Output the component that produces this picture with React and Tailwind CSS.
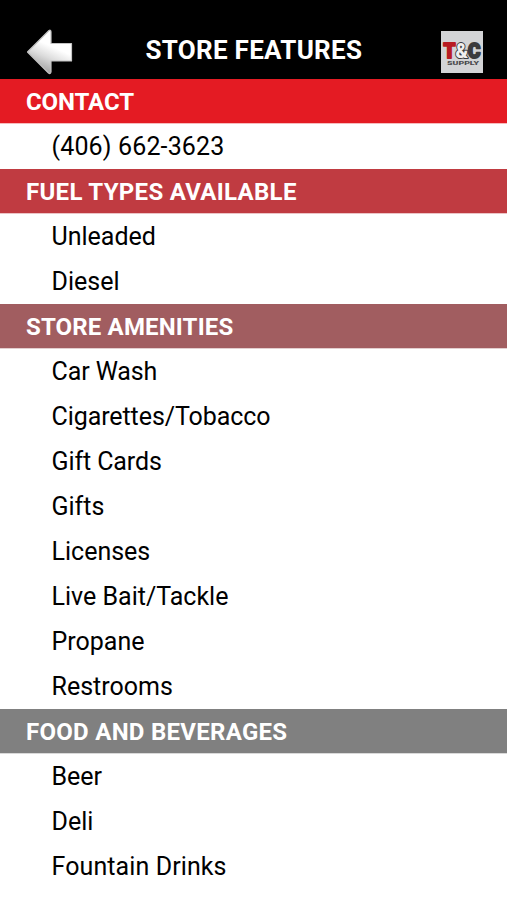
const sections = [
  {
    title: "CONTACT",
    color: "bg-[#e41b23]",
    tracking: "tracking-[-0.1px]",
    items: ["(406) 662-3623"],
  },
  {
    title: "FUEL TYPES AVAILABLE",
    color: "bg-[#c03b41]",
    tracking: "tracking-[0.3px]",
    items: ["Unleaded", "Diesel"],
  },
  {
    title: "STORE AMENITIES",
    color: "bg-[#a15d60]",
    tracking: "tracking-[0.15px]",
    items: [
      "Car Wash",
      "Cigarettes/Tobacco",
      "Gift Cards",
      "Gifts",
      "Licenses",
      "Live Bait/Tackle",
      "Propane",
      "Restrooms",
    ],
  },
  {
    title: "FOOD AND BEVERAGES",
    color: "bg-[#808080]",
    tracking: "tracking-[0.28px]",
    items: ["Beer", "Deli", "Fountain Drinks"],
  },
];

// a few rows are set slightly wider or tighter than the rest
const itemTracking = {
  "(406) 662-3623": "tracking-[0.15px]",
  "Fountain Drinks": "tracking-[0.1px]",
  "Car Wash": "tracking-[-0.1px]",
  "Gift Cards": "tracking-[-0.1px]",
  "Cigarettes/Tobacco": "tracking-[-0.08px]",
};

function BackArrow() {
  return (
    <svg width="48" height="48" viewBox="0 0 48 48">
      <defs>
        <linearGradient id="arrow" x1="0.25" y1="0.9" x2="0.5" y2="0.35">
          <stop offset="0" stopColor="#a2a2a2" />
          <stop offset="0.55" stopColor="#dcdcdc" />
          <stop offset="1" stopColor="#ffffff" />
        </linearGradient>
      </defs>
      <path
        d="M1.5 24 L23 2.5 Q25 1.5 25 4 V15.5 H45.5 V33 H25 V44 Q24.5 46.5 22.5 45 Z"
        fill="url(#arrow)"
        stroke="#c4c4c4"
        strokeWidth="1.2"
        strokeLinejoin="round"
      />
    </svg>
  );
}

function Logo() {
  return (
    <svg
      width="42"
      height="42"
      viewBox="0 0 42 42"
      fontFamily="Roboto, sans-serif"
      fontWeight="900"
    >
      <rect width="42" height="42" fill="#d3d4d6" />
      <text
        x="2.5"
        y="27"
        fontSize="21"
        textLength="37"
        lengthAdjust="spacingAndGlyphs"
        strokeLinejoin="round"
        paintOrder="stroke"
      >
        <tspan fill="#b81c22" stroke="#b81c22" strokeWidth="2">T</tspan>
        <tspan fill="#f0f0f0" stroke="#3b3b3d" strokeWidth="2">&amp;</tspan>
        <tspan fill="#3b3b3d" stroke="#3b3b3d" strokeWidth="2">C</tspan>
      </text>
      <text
        x="6"
        y="34"
        fontSize="5"
        textLength="32"
        lengthAdjust="spacingAndGlyphs"
        fill="#4a4a4c"
      >
        SUPPLY
      </text>
    </svg>
  );
}

function Section({ title, color, tracking, items }) {
  return (
    <section>
      <h2
        className={`${color} ${tracking} h-[45px] border-b border-white/70 pl-[26px] text-2xl leading-[46px] font-bold text-white`}
      >
        {title}
      </h2>
      <ul>
        {items.map((item) => (
          <li
            key={item}
            className={`${itemTracking[item] || ""} h-[45px] pl-[51.5px] text-[25px] leading-[45px]`}
          >
            {item}
          </li>
        ))}
      </ul>
    </section>
  );
}

function App() {
  return (
    <div className="h-[900px] overflow-hidden bg-white font-['Roboto',sans-serif] text-black">
      <header className="flex h-[79px] items-end bg-black pr-6 pl-[26px]">
        <div className="flex w-[119.5px] pb-[3px]">
          <BackArrow />
        </div>
        <h1 className="grow pb-[11px] text-[26px] leading-9 font-bold tracking-[0.28px] text-white">
          STORE FEATURES
        </h1>
        <div className="flex pb-1.5">
          <Logo />
        </div>
      </header>
      {sections.map((section) => (
        <Section key={section.title} {...section} />
      ))}
    </div>
  );
}

export default App;
